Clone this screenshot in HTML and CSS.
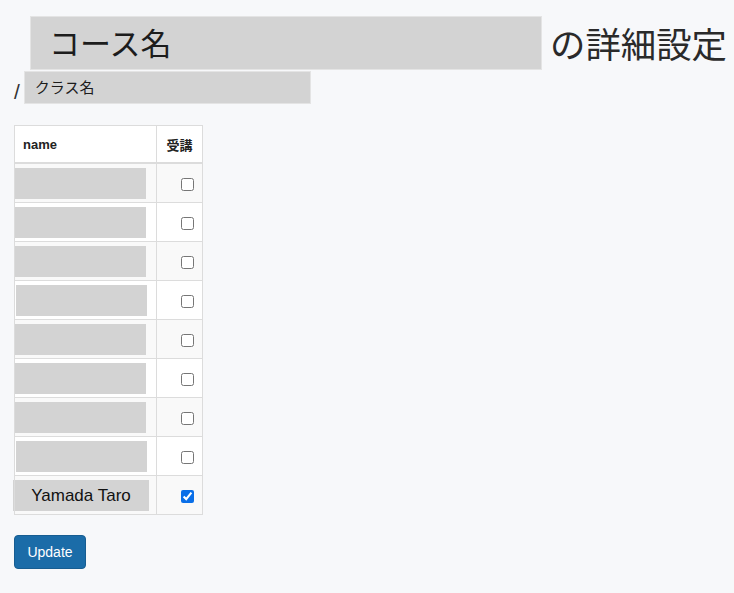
FILE: index.html
```html
<!DOCTYPE html>
<html lang="ja">
<head>
    <meta charset="UTF-8">
    <meta name="viewport" content="width=device-width, initial-scale=1.0">
    <title>コース名の詳細設定</title>
    <link rel="stylesheet" href="styles.css">
</head>
<body>
<div class="container">
    <h1 class="title">
        <span class="field field-course">コース名</span>
        <span class="title-suffix">の詳細設定</span>
    </h1>
    <div class="subtitle">
        <span class="slash">/</span>
        <span class="field field-class">クラス名</span>
    </div>

    <form id="enrollForm">
        <table class="members">
            <thead>
                <tr>
                    <th class="col-name">name</th>
                    <th class="col-check">受講</th>
                </tr>
            </thead>
            <tbody>
                <tr><td class="col-name"><span class="name-box"></span></td><td class="col-check"><input type="checkbox"></td></tr>
                <tr><td class="col-name"><span class="name-box"></span></td><td class="col-check"><input type="checkbox"></td></tr>
                <tr><td class="col-name"><span class="name-box"></span></td><td class="col-check"><input type="checkbox"></td></tr>
                <tr><td class="col-name"><span class="name-box name-box-shift"></span></td><td class="col-check"><input type="checkbox"></td></tr>
                <tr><td class="col-name"><span class="name-box"></span></td><td class="col-check"><input type="checkbox"></td></tr>
                <tr><td class="col-name"><span class="name-box"></span></td><td class="col-check"><input type="checkbox"></td></tr>
                <tr><td class="col-name"><span class="name-box"></span></td><td class="col-check"><input type="checkbox"></td></tr>
                <tr><td class="col-name"><span class="name-box name-box-shift"></span></td><td class="col-check"><input type="checkbox"></td></tr>
                <tr><td class="col-name"><span class="name-box name-box-wide">Yamada Taro</span></td><td class="col-check"><input type="checkbox" checked></td></tr>
            </tbody>
        </table>
        <button type="submit" class="btn-update">Update</button>
    </form>
</div>
</body>
</html>
```

FILE: styles.css
```css
body {
    margin: 0;
    font-family: "Liberation Sans", "Noto Sans CJK JP", sans-serif;
    background-color: #f7f8fa;
    color: #222;
    overflow: hidden;
}

.container {
    padding: 16px 14px;
}

.title {
    display: flex;
    align-items: center;
    margin: 0;
    padding-left: 16px;
    font-weight: normal;
    white-space: nowrap;
}

.field {
    display: block;
    flex-shrink: 0;
    box-sizing: border-box;
    background: #d3d3d3;
    border: 1px solid #e4e4e4;
    font-family: "Noto Sans CJK JP", sans-serif;
    color: #1c1c1c;
}

.field-course {
    width: 512px;
    height: 54px;
    padding: 0 0 0 18px;
    font-size: 31px;
    line-height: 50px;
}

.title-suffix {
    flex-shrink: 0;
    margin-left: 8px;
    font-family: "Noto Sans CJK JP", sans-serif;
    font-size: 35.4px;
    line-height: 40px;
    color: #2a2a2a;
}

.subtitle {
    display: flex;
    align-items: flex-end;
    margin-top: 1px;
}

.slash {
    font-family: "Liberation Sans", sans-serif;
    font-size: 21px;
    line-height: 24px;
    color: #333;
    margin: 0 4px 0 0;
}

.field-class {
    width: 287px;
    height: 33px;
    padding-left: 10px;
    font-size: 15px;
    line-height: 30px;
}

.members {
    margin-top: 21px;
    border-collapse: collapse;
    border: 1px solid #dcdcdc;
    width: 189px;
    font-size: 13px;
}

.members th,
.members td {
    border: 1px solid #dcdcdc;
    padding: 0;
}

.members th {
    height: 36px;
    background: #fff;
    font-weight: bold;
    text-align: left;
    border-bottom-width: 2px;
}

.members th.col-name {
    padding-left: 8px;
}

.members th.col-check {
    text-align: center;
    font-family: "Noto Sans CJK JP", sans-serif;
    width: 45px;
}

.members td {
    height: 38px;
    background: #fff;
}

.members tbody tr:nth-child(odd) td {
    background: #f9f9f9;
}

.members td.col-check {
    text-align: right;
    padding-right: 5px;
}

.members td.col-check input {
    margin: 3px 3px 0 4px;
    vertical-align: middle;
    accent-color: #0a6fe8;
}

.name-box {
    display: block;
    width: 131px;
    height: 31px;
    margin: 0 8px 0 0;
    background: #d3d3d3;
}

.name-box-shift {
    margin-left: 1px;
    margin-right: 7px;
}

.name-box-wide {
    width: 136px;
    margin-left: -2px;
    margin-right: 5px;
    font-size: 17px;
    line-height: 31px;
    text-align: center;
    color: #111;
}

.btn-update {
    display: block;
    margin-top: 20px;
    width: 72px;
    height: 34px;
    padding: 0;
    background-color: #1b6ca8;
    color: #fff;
    border: 1px solid #175d91;
    border-radius: 4px;
    font-family: "Liberation Sans", sans-serif;
    font-size: 14px;
    cursor: pointer;
}

.btn-update:hover {
    background-color: #175d91;
}
```
